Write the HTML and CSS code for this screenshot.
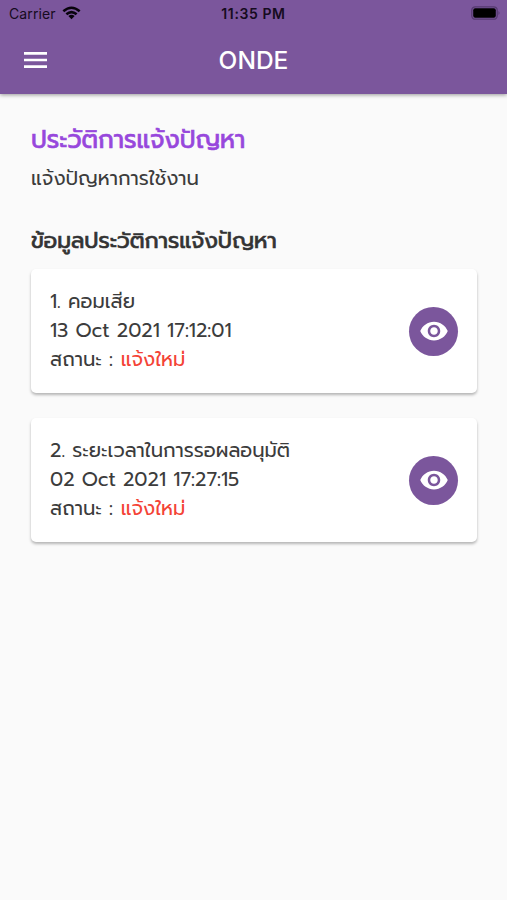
FILE: index.html
```html
<!DOCTYPE html>
<html lang="th">
<head>
<meta charset="utf-8">
<meta name="viewport" content="width=device-width, initial-scale=1">
<title>ONDE</title>
<link rel="stylesheet" href="styles.css">
</head>
<body>
<header class="appbar">
  <div class="status">
    <div class="carrier"><span>Carrier</span>
      <svg class="wifi" viewBox="0 0 20 14"><g fill="none" stroke="#08030c" stroke-width="2.7"><path d="M1.4 5.2Q10-2.2 18.6 5.2"/><path d="M4.6 8.4Q10 3.8 15.4 8.4"/></g><path d="M6.7 10.2Q10 7.6 13.3 10.2L10 13.6Z" fill="#08030c"/></svg>
    </div>
    <span class="clock">11:35 PM</span>
    <svg class="battery" viewBox="0 0 30 14"><rect x=".8" y=".8" width="25.4" height="12.4" rx="3.5" fill="none" stroke="#553a70" stroke-width="1.3"/><rect x="2.2" y="2.2" width="22.6" height="9.6" rx="2" fill="#000"/><path d="M27.5 5Q29.5 7 27.5 9Z" fill="#553a70"/></svg>
  </div>
  <div class="toolbar">
    <svg class="menu" viewBox="0 0 23 16"><path d="M0 1.4H23M0 8H23M0 14.6H23" stroke="#fff" stroke-width="2.6"/></svg>
    <h1 class="title">ONDE</h1>
  </div>
</header>
<main class="content">
  <h2 class="heading">ประวัติการแจ้งปัญหา</h2>
  <p class="subtitle">แจ้งปัญหาการใช้งาน</p>
  <h3 class="section">ข้อมูลประวัติการแจ้งปัญหา</h3>
  <article class="card">
    <div class="details">
      <p>1. คอมเสีย</p>
      <p>13 Oct 2021 17:12:01</p>
      <p>สถานะ : <span class="state">แจ้งใหม่</span></p>
    </div>
    <button class="view" aria-label="ดู"><svg viewBox="0 0 24 24"><path fill="#fff" d="M12 4.5C7 4.5 2.73 7.61 1 12c1.73 4.39 6 7.5 11 7.5s9.27-3.11 11-7.5c-1.73-4.39-6-7.5-11-7.5zM12 17c-2.76 0-5-2.24-5-5s2.24-5 5-5 5 2.24 5 5-2.24 5-5 5zm0-8c-1.66 0-3 1.34-3 3s1.34 3 3 3 3-1.34 3-3-1.34-3-3-3z"/></svg></button>
  </article>
  <article class="card">
    <div class="details">
      <p>2. ระยะเวลาในการรอผลอนุมัติ</p>
      <p>02 Oct 2021 17:27:15</p>
      <p>สถานะ : <span class="state">แจ้งใหม่</span></p>
    </div>
    <button class="view" aria-label="ดู"><svg viewBox="0 0 24 24"><path fill="#fff" d="M12 4.5C7 4.5 2.73 7.61 1 12c1.73 4.39 6 7.5 11 7.5s9.27-3.11 11-7.5c-1.73-4.39-6-7.5-11-7.5zM12 17c-2.76 0-5-2.24-5-5s2.24-5 5-5 5 2.24 5 5-2.24 5-5 5zm0-8c-1.66 0-3 1.34-3 3s1.34 3 3 3 3-1.34 3-3-1.34-3-3-3z"/></svg></button>
  </article>
</main>
</body>
</html>
```
FILE: styles.css
```css
* { box-sizing: border-box; }
body {
  margin: 0;
  min-height: 900px;
  background: #fafafa;
  color: #3c3c3c;
  font-family: Prompt, "Noto Sans Thai", Lato, sans-serif;
}
h1, h2, h3, p { margin: 0; white-space: pre; }
.appbar {
  height: 94px;
  background: #7b569c;
  box-shadow: 0 1px 4px rgba(0, 0, 0, .4);
  font-family: Inter, sans-serif;
}
.status {
  display: grid;
  grid-template-columns: 1fr auto 1fr;
  align-items: center;
  height: 27px;
  padding: 0 6px 0 9px;
  font-size: 14px;
  color: #160b20;
}
.carrier { display: flex; align-items: center; gap: 6px; letter-spacing: .12px; }
.wifi { width: 19px; height: 14px; margin-top: -1px; }
.clock { margin-left: -3px; font-weight: 600; letter-spacing: .6px; }
.battery { width: 30px; height: 14px; margin-top: -1px; justify-self: end; }
.toolbar {
  display: grid;
  grid-template-columns: 23px 1fr 23px;
  align-items: center;
  height: 66px;
  padding: 0 24px;
}
.menu { width: 23px; height: 16px; }
.title {
  text-align: center;
  font-size: 24.5px;
  font-weight: 500;
  line-height: 30px;
  color: #fff;
}
.content { padding: 28px 30px 0 31px; }
.heading { height: 36px; line-height: 36px; font-size: 24.5px; font-weight: 400; color: #9747dc; -webkit-text-stroke: .7px currentColor; }
.subtitle { height: 40px; line-height: 41px; font-size: 19.6px; }
.section { height: 40px; margin: 22px 0 9px; line-height: 41px; font-size: 22px; font-weight: 400; color: #333; -webkit-text-stroke: .7px currentColor; }
.card {
  display: flex;
  align-items: center;
  justify-content: space-between;
  height: 124px;
  margin-bottom: 25px;
  padding: 0 19px;
  border-radius: 5px;
  background: #fff;
  box-shadow: 0 2px 3px rgba(0, 0, 0, .28);
}
.details { margin-top: -2px; font-size: 19.6px; line-height: 29px; }
.details p { height: 29px; }
.state { margin-left: .5px; color: #f44336; }
.view {
  display: grid;
  place-items: center;
  width: 49px;
  height: 49px;
  padding: 0;
  border: 0;
  border-radius: 50%;
  background: #7b569c;
}
.view svg { width: 30px; height: 30px; }
```
